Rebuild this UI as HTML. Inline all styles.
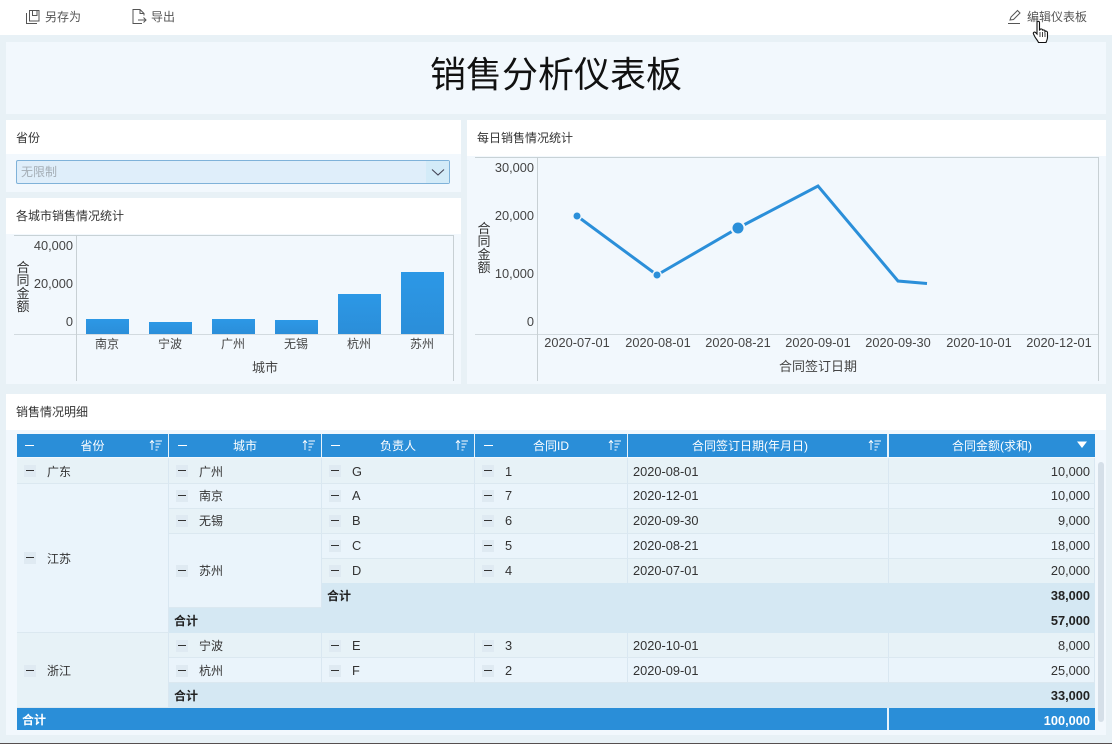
<!DOCTYPE html>
<html lang="zh-CN">
<head>
<meta charset="utf-8">
<title>销售分析仪表板</title>
<style>
html,body{margin:0;padding:0;width:1112px;height:744px;overflow:hidden;background:#e8f1f6}
body{position:relative;font-family:"Liberation Sans","Noto Sans CJK SC",sans-serif;font-size:12px;color:#333}
div,svg{position:absolute;box-sizing:border-box}
.t{white-space:nowrap;line-height:16px}
.p{background:#f2f8fd}
.h{background:#fff}
.c{height:25px;line-height:24px;border-bottom:1px solid #dbe8f0;border-right:1px solid #d9e7f1;white-space:nowrap;color:#333}
.a{background:#e7f2f7}
.b{background:#eaf4fb}
.s{background:#d5e8f3;font-weight:bold;color:#222;line-height:26px;height:25px;white-space:nowrap}
.m{width:12px;height:12px;background:#dfeaf2}
.m:after{content:"";position:absolute;left:2px;top:5px;width:8px;height:1.4px;background:#333}
.n{font-size:12.800px;text-align:right;padding-right:5px}
.c.n{padding-right:4px}
.d{font-size:12.800px}
.th{top:434px;height:23px;line-height:25px;color:#fff;text-align:center;white-space:nowrap}
.w{width:9px;height:1.4px;background:#fff;top:445px}
.ax{font-size:12.800px;color:#444;white-space:nowrap;line-height:14px}
.ct{font-size:12px;color:#444;white-space:nowrap;line-height:16px;text-align:center}
.ct2{font-size:13px;color:#444;white-space:nowrap;line-height:16px;text-align:center}
.v{font-size:13px;color:#333;line-height:13px;width:14px;text-align:center}
.bar{background:linear-gradient(#2c98e6,#2b8ed9)}
</style>
</head>
<body>

<!-- toolbar -->
<div style="left:0;top:0;width:1112px;height:35px;background:#fff"></div>
<svg style="left:24px;top:8px" width="18" height="18" viewBox="0 0 18 18" fill="none" stroke="#555" stroke-width="1">
<path d="M2.500 5v10.500h10.500"/><path d="M5.500 2.500h9.500v10.500h-9.500z"/><path d="M8.500 2.500v5h4.500v-5"/>
</svg>
<div class="t" style="left:45px;top:9px;color:#555">另存为</div>
<svg style="left:131px;top:8px" width="18" height="18" viewBox="0 0 18 18" fill="none" stroke="#555" stroke-width="1">
<path d="M11 15.500h-9v-14h7l4 4v2"/><path d="M9 1.500v4h4"/><path d="M7 12h8M12.500 9.500l2.500 2.500-2.500 2.500"/>
</svg>
<div class="t" style="left:151px;top:9px;color:#555">导出</div>
<svg style="left:1007px;top:9px" width="16" height="16" viewBox="0 0 16 16" fill="none" stroke="#555" stroke-width="1">
<path d="M3 11l1-3 6.500-6.500 2.500 2.500-6.500 6.500z"/><path d="M1 14.500h12"/>
</svg>
<div class="t" style="left:1027px;top:9px;color:#555">编辑仪表板</div>

<!-- title -->
<div class="p" style="left:6px;top:42px;width:1100px;height:72px"></div>
<div style="left:6px;top:50px;width:1100px;height:48px;line-height:50px;text-align:center;font-size:36px;color:#111;white-space:nowrap">销售分析仪表板</div>

<!-- province filter -->
<div class="h" style="left:6px;top:120px;width:455px;height:34px"></div>
<div class="p" style="left:6px;top:154px;width:455px;height:38px"></div>
<div class="t" style="left:16px;top:130px">省份</div>
<div style="left:16px;top:160px;width:434px;height:24px;background:#dfeefa;border:1px solid #7fb2d9;border-radius:2px"></div>
<div style="left:426px;top:161px;width:23px;height:22px;background:#d3ebf8"></div>
<svg style="left:431px;top:168px" width="14" height="9" viewBox="0 0 14 9" fill="none" stroke="#445" stroke-width="1.100"><path d="M1 1.500l6 5.500 6-5.500"/></svg>
<div class="t" style="left:21px;top:164px;color:#a4adb5">无限制</div>

<!-- city chart -->
<div class="h" style="left:6px;top:198px;width:455px;height:36px"></div>
<div class="p" style="left:6px;top:234px;width:455px;height:150px"></div>
<div class="t" style="left:16px;top:208px">各城市销售情况统计</div>
<div style="left:14px;top:235px;width:440px;height:1px;background:#c8d2d6"></div>
<div style="left:14px;top:334px;width:440px;height:1px;background:#d2dadf"></div>
<div style="left:76px;top:235px;width:1px;height:146px;background:#c8d0d4"></div>
<div style="left:453px;top:235px;width:1px;height:146px;background:#c8d0d4"></div>
<div class="bar" style="left:86px;top:319px;width:43px;height:15px"></div>
<div class="bar" style="left:149px;top:322px;width:43px;height:12px"></div>
<div class="bar" style="left:212px;top:319px;width:43px;height:15px"></div>
<div class="bar" style="left:275px;top:320px;width:43px;height:14px"></div>
<div class="bar" style="left:338px;top:294px;width:43px;height:40px"></div>
<div class="bar" style="left:401px;top:272px;width:43px;height:62px"></div>
<div class="ax" style="left:20px;top:239px;width:53px;text-align:right">40,000</div>
<div class="ax" style="left:20px;top:277px;width:53px;text-align:right">20,000</div>
<div class="ax" style="left:20px;top:315px;width:53px;text-align:right">0</div>
<div class="v" style="left:16px;top:261px">合<br>同<br>金<br>额</div>
<div class="ct" style="left:87px;top:336px;width:40px">南京</div>
<div class="ct" style="left:150px;top:336px;width:40px">宁波</div>
<div class="ct" style="left:213px;top:336px;width:40px">广州</div>
<div class="ct" style="left:276px;top:336px;width:40px">无锡</div>
<div class="ct" style="left:339px;top:336px;width:40px">杭州</div>
<div class="ct" style="left:402px;top:336px;width:40px">苏州</div>
<div class="ct2" style="left:245px;top:360px;width:40px">城市</div>

<!-- daily chart -->
<div class="h" style="left:467px;top:120px;width:639px;height:36px"></div>
<div class="p" style="left:467px;top:156px;width:639px;height:228px"></div>
<div class="t" style="left:477px;top:130px">每日销售情况统计</div>
<div style="left:475px;top:157px;width:624px;height:1px;background:#c8d2d6"></div>
<div style="left:475px;top:334px;width:624px;height:1px;background:#d2dadf"></div>
<div style="left:537px;top:157px;width:1px;height:224px;background:#c8d0d4"></div>
<div style="left:1098px;top:157px;width:1px;height:224px;background:#c8d0d4"></div>
<svg style="left:467px;top:157px" width="640" height="224" viewBox="467 157 640 224" fill="none">
<path d="M577 216L657 275L738 228L818 186L898 281L927 283.500" stroke="#2b8fd9" stroke-width="3"/>
<circle cx="577" cy="216" r="5" fill="#f2f8fd"/><circle cx="577" cy="216" r="3.500" fill="#2b8fd9"/>
<circle cx="657" cy="275" r="5" fill="#f2f8fd"/><circle cx="657" cy="275" r="3.500" fill="#2b8fd9"/>
<circle cx="738" cy="228" r="7.500" fill="#f2f8fd"/><circle cx="738" cy="228" r="5.500" fill="#2b8fd9"/>
</svg>
<div class="ax" style="left:480px;top:161px;width:54px;text-align:right">30,000</div>
<div class="ax" style="left:480px;top:209px;width:54px;text-align:right">20,000</div>
<div class="ax" style="left:480px;top:267px;width:54px;text-align:right">10,000</div>
<div class="ax" style="left:480px;top:315px;width:54px;text-align:right">0</div>
<div class="v" style="left:477px;top:222px">合<br>同<br>金<br>额</div>
<div class="ax" style="left:537px;top:336px;width:80px;text-align:center">2020-07-01</div>
<div class="ax" style="left:618px;top:336px;width:80px;text-align:center">2020-08-01</div>
<div class="ax" style="left:698px;top:336px;width:80px;text-align:center">2020-08-21</div>
<div class="ax" style="left:778px;top:336px;width:80px;text-align:center">2020-09-01</div>
<div class="ax" style="left:858px;top:336px;width:80px;text-align:center">2020-09-30</div>
<div class="ax" style="left:939px;top:336px;width:80px;text-align:center">2020-10-01</div>
<div class="ax" style="left:1019px;top:336px;width:80px;text-align:center">2020-12-01</div>
<div class="ct2" style="left:768px;top:359px;width:100px">合同签订日期</div>

<!-- detail table -->
<div class="h" style="left:6px;top:394px;width:1100px;height:36px"></div>
<div style="left:6px;top:430px;width:1100px;height:305px;background:#f2f8fd"></div>
<div class="t" style="left:16px;top:404px">销售情况明细</div>

<div style="left:17px;top:434px;width:1078px;height:23px;background:#2a8ed8"></div>
<div style="left:168px;top:434px;width:1px;height:23px;background:#e8f3fa"></div>
<div style="left:321px;top:434px;width:1px;height:23px;background:#e8f3fa"></div>
<div style="left:474px;top:434px;width:1px;height:23px;background:#e8f3fa"></div>
<div style="left:627px;top:434px;width:1px;height:23px;background:#e8f3fa"></div>
<div style="left:887px;top:434px;width:2px;height:23px;background:#e8f3fa"></div>
<div class="th" style="left:17px;width:151px">省份</div>
<div class="th" style="left:169px;width:152px">城市</div>
<div class="th" style="left:322px;width:152px">负责人</div>
<div class="th" style="left:475px;width:152px">合同ID</div>
<div class="th" style="left:628px;width:244px">合同签订日期(年月日)</div>
<div class="th" style="left:889px;width:206px">合同金额(求和)</div>
<div class="w" style="left:25px"></div>
<div class="w" style="left:178px"></div>
<div class="w" style="left:331px"></div>
<div class="w" style="left:484px"></div>
<svg style="left:149px;top:438px" width="14" height="14" viewBox="0 0 14 14" fill="none" stroke="#fff" stroke-width="1"><path d="M3 12V2.500M1 5l2-2.500L5 5M6.500 3h6.500M6.500 6h5M6.500 9h3.500M6.500 12h2"/></svg>
<svg style="left:302px;top:438px" width="14" height="14" viewBox="0 0 14 14" fill="none" stroke="#fff" stroke-width="1"><path d="M3 12V2.500M1 5l2-2.500L5 5M6.500 3h6.500M6.500 6h5M6.500 9h3.500M6.500 12h2"/></svg>
<svg style="left:455px;top:438px" width="14" height="14" viewBox="0 0 14 14" fill="none" stroke="#fff" stroke-width="1"><path d="M3 12V2.500M1 5l2-2.500L5 5M6.500 3h6.500M6.500 6h5M6.500 9h3.500M6.500 12h2"/></svg>
<svg style="left:608px;top:438px" width="14" height="14" viewBox="0 0 14 14" fill="none" stroke="#fff" stroke-width="1"><path d="M3 12V2.500M1 5l2-2.500L5 5M6.500 3h6.500M6.500 6h5M6.500 9h3.500M6.500 12h2"/></svg>
<svg style="left:868px;top:438px" width="14" height="14" viewBox="0 0 14 14" fill="none" stroke="#fff" stroke-width="1"><path d="M3 12V2.500M1 5l2-2.500L5 5M6.500 3h6.500M6.500 6h5M6.500 9h3.500M6.500 12h2"/></svg>
<svg style="left:1076px;top:441px" width="12" height="8" viewBox="0 0 12 8"><path d="M1 0.500h10L6 7z" fill="#fff"/></svg>

<!-- province column -->
<div class="c a" style="left:17px;top:458px;width:152px;height:26px;line-height:28px;padding-left:30px">广东</div>
<div class="c b" style="left:17px;top:484px;width:152px;height:149px;line-height:150px;padding-left:30px">江苏</div>
<div class="c a" style="left:17px;top:633px;width:152px;height:75px;line-height:77px;padding-left:30px">浙江</div>
<div class="m" style="left:24px;top:465px"></div>
<div class="m" style="left:24px;top:552px"></div>
<div class="m" style="left:24px;top:665px"></div>

<!-- city column -->
<div class="c a" style="left:169px;top:458px;width:153px;height:26px;padding-left:30px;line-height:28px">广州</div>
<div class="c b" style="left:169px;top:484px;width:153px;padding-left:30px">南京</div>
<div class="c a" style="left:169px;top:509px;width:153px;padding-left:30px">无锡</div>
<div class="c b" style="left:169px;top:534px;width:153px;height:74px;line-height:74px;padding-left:30px">苏州</div>
<div class="c a" style="left:169px;top:633px;width:153px;padding-left:30px;line-height:26px">宁波</div>
<div class="c b" style="left:169px;top:658px;width:153px;padding-left:30px;line-height:26px">杭州</div>
<div class="m" style="left:176px;top:465px"></div>
<div class="m" style="left:176px;top:490px"></div>
<div class="m" style="left:176px;top:515px"></div>
<div class="m" style="left:176px;top:565px"></div>
<div class="m" style="left:176px;top:640px"></div>
<div class="m" style="left:176px;top:665px"></div>

<!-- person column -->
<div class="c a d" style="left:322px;top:458px;width:153px;height:26px;padding-left:30px;line-height:28px">G</div>
<div class="c b d" style="left:322px;top:484px;width:153px;padding-left:30px">A</div>
<div class="c a d" style="left:322px;top:509px;width:153px;padding-left:30px">B</div>
<div class="c b d" style="left:322px;top:534px;width:153px;padding-left:30px">C</div>
<div class="c a d" style="left:322px;top:559px;width:153px;padding-left:30px">D</div>
<div class="c a d" style="left:322px;top:633px;width:153px;padding-left:30px;line-height:26px">E</div>
<div class="c b d" style="left:322px;top:658px;width:153px;padding-left:30px;line-height:26px">F</div>
<div class="m" style="left:329px;top:465px"></div>
<div class="m" style="left:329px;top:490px"></div>
<div class="m" style="left:329px;top:515px"></div>
<div class="m" style="left:329px;top:540px"></div>
<div class="m" style="left:329px;top:565px"></div>
<div class="m" style="left:329px;top:640px"></div>
<div class="m" style="left:329px;top:665px"></div>

<!-- ID column -->
<div class="c a d" style="left:475px;top:458px;width:153px;height:26px;padding-left:30px;line-height:28px">1</div>
<div class="c b d" style="left:475px;top:484px;width:153px;padding-left:30px">7</div>
<div class="c a d" style="left:475px;top:509px;width:153px;padding-left:30px">6</div>
<div class="c b d" style="left:475px;top:534px;width:153px;padding-left:30px">5</div>
<div class="c a d" style="left:475px;top:559px;width:153px;padding-left:30px">4</div>
<div class="c a d" style="left:475px;top:633px;width:153px;padding-left:30px;line-height:26px">3</div>
<div class="c b d" style="left:475px;top:658px;width:153px;padding-left:30px;line-height:26px">2</div>
<div class="m" style="left:482px;top:465px"></div>
<div class="m" style="left:482px;top:490px"></div>
<div class="m" style="left:482px;top:515px"></div>
<div class="m" style="left:482px;top:540px"></div>
<div class="m" style="left:482px;top:565px"></div>
<div class="m" style="left:482px;top:640px"></div>
<div class="m" style="left:482px;top:665px"></div>

<!-- date column -->
<div class="c a d" style="left:628px;top:458px;width:261px;height:26px;padding-left:5px;line-height:28px">2020-08-01</div>
<div class="c b d" style="left:628px;top:484px;width:261px;padding-left:5px">2020-12-01</div>
<div class="c a d" style="left:628px;top:509px;width:261px;padding-left:5px">2020-09-30</div>
<div class="c b d" style="left:628px;top:534px;width:261px;padding-left:5px">2020-08-21</div>
<div class="c a d" style="left:628px;top:559px;width:261px;padding-left:5px">2020-07-01</div>
<div class="c a d" style="left:628px;top:633px;width:261px;padding-left:5px;line-height:26px">2020-10-01</div>
<div class="c b d" style="left:628px;top:658px;width:261px;padding-left:5px;line-height:26px">2020-09-01</div>

<!-- amount column -->
<div class="c a n" style="left:889px;top:458px;width:206px;height:26px;line-height:28px">10,000</div>
<div class="c b n" style="left:889px;top:484px;width:206px">10,000</div>
<div class="c a n" style="left:889px;top:509px;width:206px">9,000</div>
<div class="c b n" style="left:889px;top:534px;width:206px">18,000</div>
<div class="c a n" style="left:889px;top:559px;width:206px">20,000</div>
<div class="c a n" style="left:889px;top:633px;width:206px;line-height:26px">8,000</div>
<div class="c b n" style="left:889px;top:658px;width:206px;line-height:26px">25,000</div>

<!-- subtotals -->
<div class="s" style="left:322px;top:583px;width:773px;padding-left:5px">合计</div>
<div class="s" style="left:169px;top:608px;width:926px;padding-left:5px">合计</div>
<div class="s" style="left:169px;top:683px;width:926px;padding-left:5px">合计</div>
<div class="s n" style="left:889px;top:583px;width:206px;background:none">38,000</div>
<div class="s n" style="left:889px;top:608px;width:206px;background:none">57,000</div>
<div class="s n" style="left:889px;top:683px;width:206px;background:none">33,000</div>

<!-- grand total -->
<div style="left:17px;top:708px;width:1078px;height:22px;background:#2a8ed8"></div>
<div style="left:887px;top:708px;width:2px;height:22px;background:#e8f3fa"></div>
<div style="left:22px;top:708px;height:22px;line-height:25px;color:#fff;font-weight:bold;white-space:nowrap">合计</div>
<div class="n" style="left:889px;top:708px;width:206px;height:22px;line-height:25px;color:#fff;font-weight:bold">100,000</div>

<!-- scrollbar -->
<div style="left:1098px;top:462px;width:6px;height:260px;background:#d5dfe8;border-radius:3px"></div>

<!-- bottom strip -->
<div style="left:0;top:743px;width:1112px;height:1px;background:#554f50"></div>

<!-- cursor -->
<svg style="left:1032px;top:20px" width="20" height="26" viewBox="0 0 20 26">
<path d="M5 2.500c0-1.500 2.500-1.500 2.500 0v8l0.500-1c0.500-1 2.500-0.500 2.500 0.500v0.500c0.500-1 2.500-0.500 2.500 0.500v0.500c0.700-0.800 2.500-0.300 2.500 1v5c0 2-1 3.500-1.500 5h-7.500c-0.800-2-2-3-3.500-5.500l-1.500-3c-0.700-1.500 1-2.500 2-1.500l1.500 1.500z" fill="#fff" stroke="#111" stroke-width="1.100"/>
<path d="M8 12v5M10.500 12v5M13 12.500v4.500" stroke="#111" stroke-width="0.800" fill="none"/>
</svg>
</body>
</html>
